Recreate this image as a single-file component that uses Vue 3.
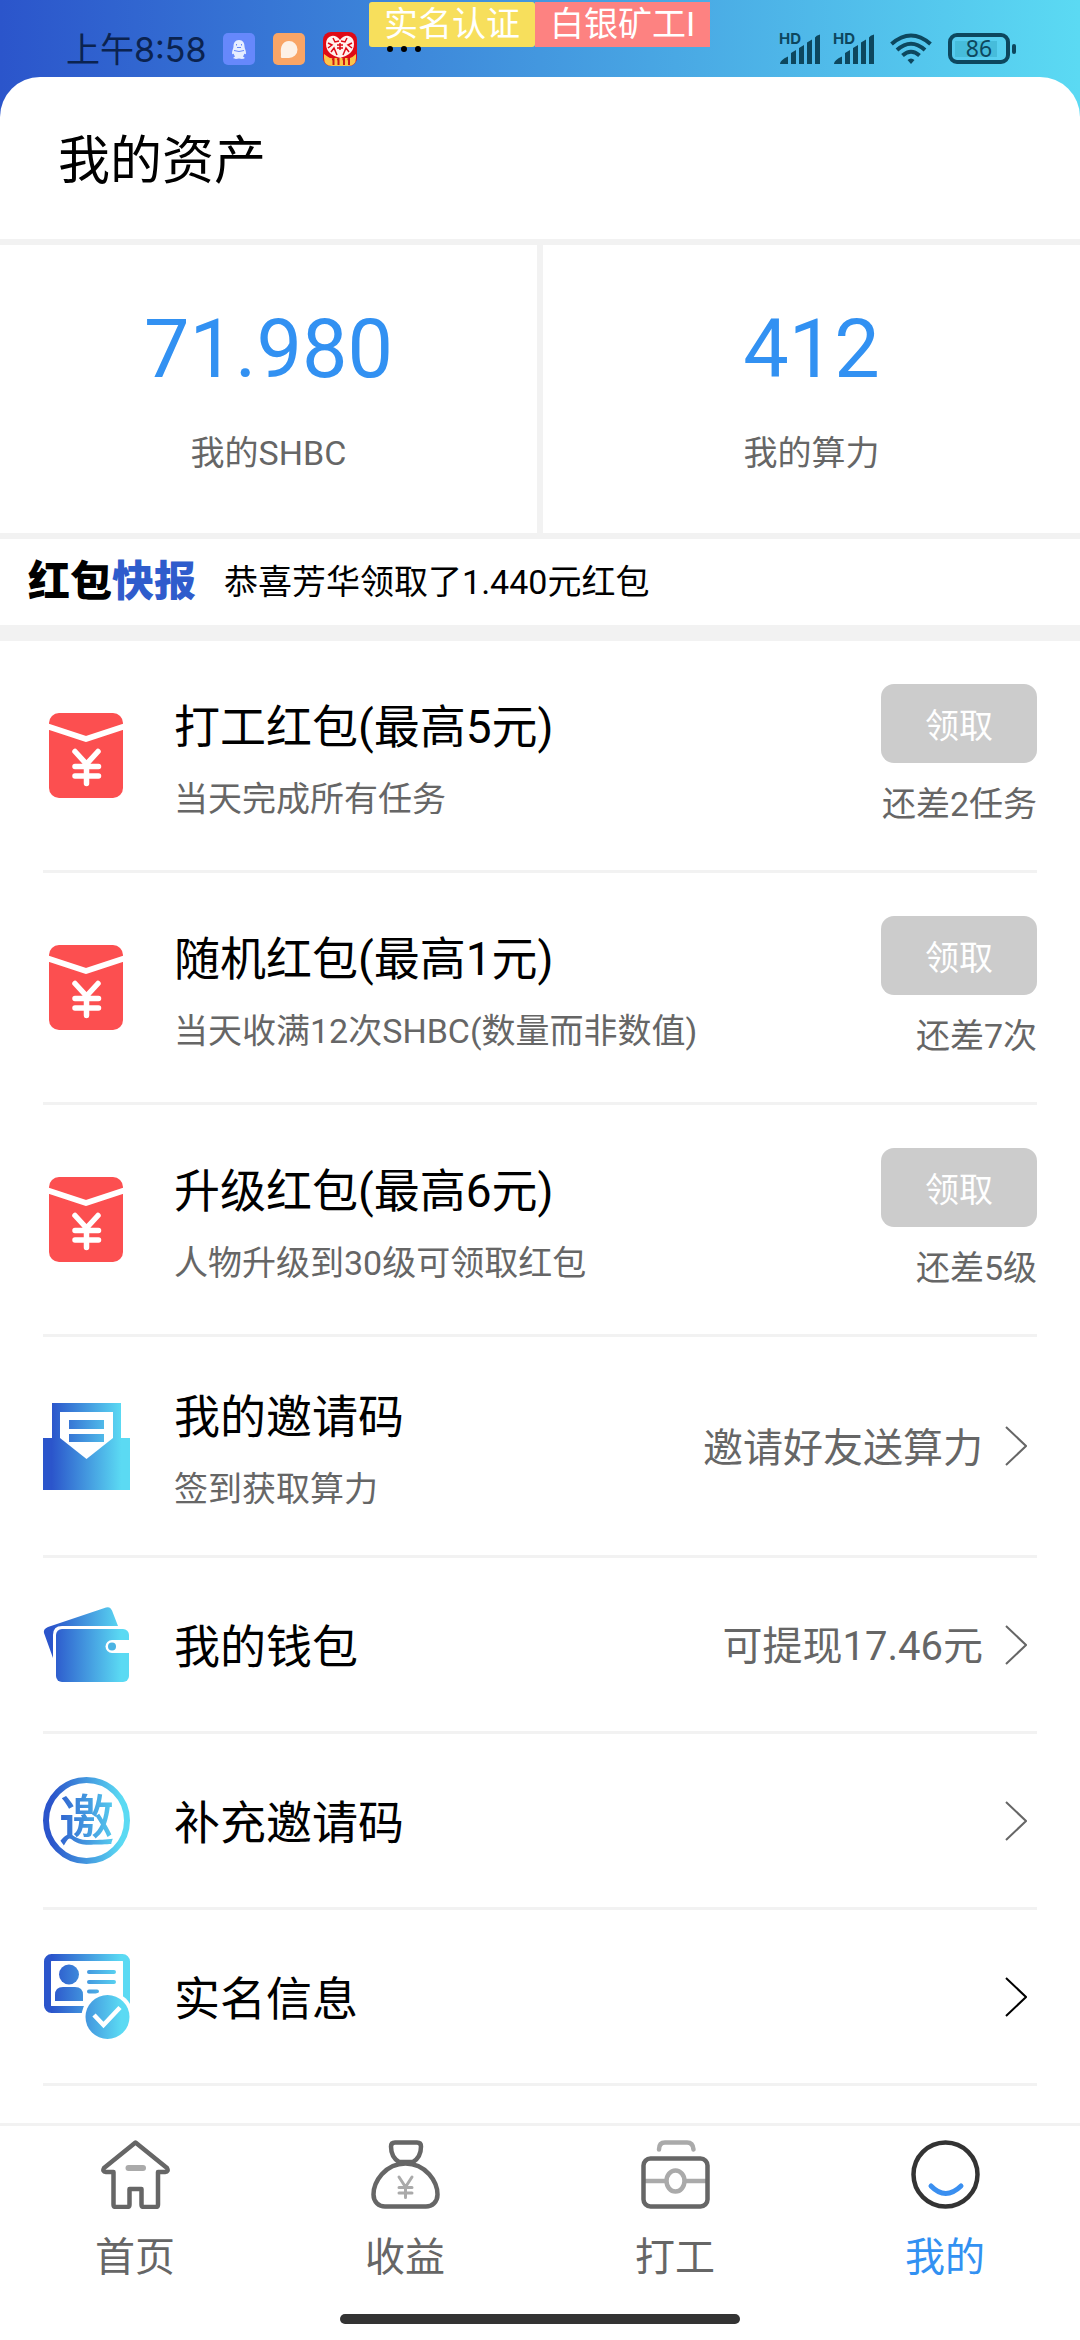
<script setup>
const stats = [
  { value: '71.980', label: '我的SHBC' },
  { value: '412', label: '我的算力' },
]

const rewards = [
  { title: '打工红包(最高5元)', note: '当天完成所有任务', left: '还差2任务' },
  { title: '随机红包(最高1元)', note: '当天收满12次SHBC(数量而非数值)', left: '还差7次' },
  { title: '升级红包(最高6元)', note: '人物升级到30级可领取红包', left: '还差5级' },
]

const links = [
  { icon: 'invite', title: '我的邀请码', note: '签到获取算力', extra: '邀请好友送算力' },
  { icon: 'wallet', title: '我的钱包', extra: '可提现17.46元' },
  { icon: 'code', title: '补充邀请码' },
  { icon: 'identity', title: '实名信息', dark: true },
]

const tabs = [
  { icon: 'home', label: '首页' },
  { icon: 'income', label: '收益' },
  { icon: 'work', label: '打工' },
  { icon: 'mine', label: '我的', active: true },
]
</script>

<template>
  <div class="page">
    <svg class="defs" width="0" height="0" aria-hidden="true">
      <defs>
        <linearGradient id="brand" gradientUnits="userSpaceOnUse" x1="0" y1="0" x2="87" y2="0">
          <stop offset="0.1" stop-color="#2b55cb" />
          <stop offset="0.9" stop-color="#5bdaf3" />
        </linearGradient>
      </defs>
    </svg>

    <header class="top">
      <div class="status">
        <time class="clock">上午8:58</time>
        <div class="notices">
          <svg width="32" height="32" viewBox="0 0 32 32">
            <rect width="32" height="32" rx="5" fill="#6688fb" />
            <path d="M16 7c-4 0-5.500 3-5.500 6.500 0 2-1.500 4-1.500 6.500 0 1.500 1 1.500 1.600.5.400 1.500 1 2.300 1.400 3-.900.500-2 1-1.500 1.800.600.900 4 .700 5.500.200 1.500.500 4.900.700 5.500-.200.500-.800-.600-1.300-1.500-1.800.400-.700 1-1.500 1.400-3 .600 1 1.600 1 1.600-.5 0-2.500-1.500-4.500-1.500-6.500C21.500 10 20 7 16 7z" fill="#e6edff" />
            <path d="M13.500 11v1.500M18.500 11v1.500M14 14.500h4M11 17.500q5 2 10 0" fill="none" stroke="#6688fb" />
          </svg>
          <svg width="32" height="32" viewBox="0 0 32 32">
            <rect width="32" height="32" rx="5" fill="#f9a566" />
            <path d="M16 8a8.500 8.500 0 1 1 0 17H8.500q-1-1-.5-3.500Q6.500 8.500 16 8z" fill="#fdf1e6" />
          </svg>
          <svg width="34" height="34" viewBox="0 0 34 34">
            <rect width="34" height="34" rx="8" fill="#df0a16" />
            <path d="M1 22q4 3 6 4h20q3-1 6-4v4q0 8-8 8H9q-8 0-8-8z" fill="#fbc54a" />
            <path d="M17 8Q13 3 8.500 4 3 5.500 3 12q0 6 5 10 3 2.500 9 4 6-1.500 9-4 5-4 5-10 0-6.500-5.500-8Q21 3 17 8z" fill="#fff2ee" />
            <path d="M10 6l2 4 4-1M24 6l-2 4-4-1M5 11l4 2-4 3M29 11l-4 2 4 3M8 20l3-4 3 7M26 20l-3-4-3 7M14 13h6M14 16h6M17 11v7" fill="none" stroke="#df0a16" stroke-width="1.500" />
            <path d="M9 27.500l1.500-.5v6M14 27.500l1.500-.5v6M19.500 27.500l1.500-.5v6M24.500 27.500l1.500-.5v6" fill="none" stroke="#cf1b13" stroke-width="2" />
          </svg>
          <svg class="more" width="34" height="8" viewBox="0 0 34 8">
            <circle cx="3" cy="4" r="3" /><circle cx="17" cy="4" r="3" /><circle cx="31" cy="4" r="3" />
          </svg>
        </div>
        <div class="signals">
          <svg v-for="n in 2" :key="n" class="signal" width="42" height="40" viewBox="0 -8 42 40" fill="#0d475e">
            <text x="0" y="11" class="hd">HD</text>
            <path d="M1 31q0-4 8-7.500V31zM12 20l5-3v14h-5zM20 15l5-3v19h-5zM28 9.500l5-3V31h-5zM36 4.500q1-2 5-3V31h-5z" />
          </svg>
          <svg class="wifi" width="42" height="32" viewBox="0 0 42 32" fill="none" stroke="#0d475e" stroke-width="4">
            <path d="M1.500 11Q21-6 40.500 11M7 17Q21 4.500 35 17M12.500 22.500Q21 15 29.500 22.500" />
            <path d="M17.500 27q3.500-3 7 0L21 31z" fill="#0d475e" stroke="none" />
          </svg>
          <svg width="68" height="32" viewBox="0 0 68 32">
            <rect x="7" y="8" width="42" height="16" fill="#46bcdb" />
            <rect x="2" y="2" width="58" height="27" rx="7" fill="none" stroke="#0d475e" stroke-width="4" />
            <rect x="64" y="11" width="4" height="10" rx="2" fill="#0d475e" />
            <text x="31" y="24" class="level" text-anchor="middle">86</text>
          </svg>
        </div>
      </div>
      <div class="tags">
        <span class="tag tag-yellow">实名认证</span>
        <span class="tag tag-pink">白银矿工I</span>
      </div>
    </header>

    <main class="card">
      <h1 class="heading">我的资产</h1>

      <section class="stats">
        <div v-for="s in stats" :key="s.label" class="stat">
          <strong class="stat-value">{{ s.value }}</strong>
          <span class="stat-label">{{ s.label }}</span>
        </div>
      </section>

      <section class="news">
        <span class="news-logo">红包<em>快报</em></span>
        <span class="news-text">恭喜芳华领取了1.440元红包</span>
      </section>

      <ul class="list">
        <li v-for="r in rewards" :key="r.title" class="row">
          <svg class="icon" viewBox="0 0 87 87">
            <rect x="6" y="1" width="74" height="85" rx="10" fill="#fc4f50" />
            <path d="M5 14.500L43 27L81 14.500" fill="none" stroke="#fff" stroke-width="6" stroke-linejoin="round" />
            <path d="M32 39.500L43.500 52L55 39.500M43.500 52V71.500M32 54.500H55.500M32 64H55.500" fill="none" stroke="#fff" stroke-width="5.500" stroke-linecap="round" stroke-linejoin="round" />
          </svg>
          <div class="info">
            <h2 class="title">{{ r.title }}</h2>
            <p class="note">{{ r.note }}</p>
          </div>
          <div class="claim">
            <button class="claim-button" type="button" disabled>领取</button>
            <span class="claim-left">{{ r.left }}</span>
          </div>
        </li>

        <li v-for="l in links" :key="l.title">
          <a class="row" href="#">
            <svg v-if="l.icon === 'invite'" class="icon" viewBox="0 0 87 87">
              <path d="M9 0H78V35H87V87H0V35H9z" fill="url(#brand)" />
              <path d="M17 9H70V35L43.500 56L17 35z" fill="#fff" />
              <path d="M26 17H61V26H26zM26 31H61V39H26z" fill="url(#brand)" />
            </svg>
            <svg v-else-if="l.icon === 'wallet'" class="icon" viewBox="0 0 87 87">
              <path d="M5 26L63 6.500Q67 5 69 9.500L75 25H19Q10 25 10 34V57L1 32Q0 28 5 26z" fill="url(#brand)" />
              <rect x="13" y="28" width="73" height="53" rx="6" fill="url(#brand)" />
              <path d="M88 39H69a6.500 6.500 0 0 0 0 13H88z" fill="#fff" />
              <circle cx="69" cy="45.500" r="4" fill="#4bb3e3" />
            </svg>
            <svg v-else-if="l.icon === 'code'" class="icon" viewBox="0 0 87 87">
              <circle cx="43.500" cy="43.500" r="40.500" fill="none" stroke="url(#brand)" stroke-width="6" />
              <text x="43.500" y="64" class="seal" text-anchor="middle" fill="url(#brand)">邀</text>
            </svg>
            <svg v-else class="icon" viewBox="0 0 87 87">
              <rect x="4.500" y="4.500" width="79" height="52" rx="4" fill="none" stroke="url(#brand)" stroke-width="7" />
              <circle cx="26" cy="21.500" r="10" fill="url(#brand)" />
              <path d="M12 48V42Q12 34 20 34H32Q40 34 40 42V48z" fill="url(#brand)" />
              <path d="M46 17h25a2 2 0 0 1 0 4h-25a2 2 0 0 1 0-4zM46 27h25a2 2 0 0 1 0 4h-25a2 2 0 0 1 0-4zM46 36.500h8a2 2 0 0 1 0 4h-8a2 2 0 0 1 0-4z" fill="url(#brand)" />
              <circle cx="64.500" cy="64" r="26" fill="#fff" />
              <circle cx="64.500" cy="64" r="22" fill="url(#brand)" />
              <path d="M51 62L60.500 72L77 54.500" fill="none" stroke="#fff" stroke-width="4.500" />
            </svg>
            <div class="info">
              <h2 class="title">{{ l.title }}</h2>
              <p v-if="l.note" class="note">{{ l.note }}</p>
            </div>
            <span v-if="l.extra" class="extra">{{ l.extra }}</span>
            <svg class="arrow" :class="{ dark: l.dark }" viewBox="0 0 22 40">
              <path d="M1 1L21 20L1 39" fill="none" stroke="currentColor" stroke-width="2" />
            </svg>
          </a>
        </li>
      </ul>
    </main>

    <nav class="tabbar">
      <div class="tabs">
        <a v-for="t in tabs" :key="t.label" class="tab" :class="{ active: t.active }" href="#">
          <svg class="tab-icon" viewBox="0 0 69 69" fill="none" stroke-width="4.500" stroke-linecap="round" stroke-linejoin="round">
            <template v-if="t.icon === 'home'">
              <path d="M34.500 2.500L66 28Q68 31.500 64 32H57V64.500Q57 67 54.500 67H43Q40.500 67 40.500 64.500V49H28.500V64.500Q28.500 67 26 67H15Q12.500 67 12.500 64.500V32H5Q1 31.500 3 28z" stroke="#666" />
              <path d="M27.500 28H42" stroke="#aaa" stroke-width="6" />
            </template>
            <template v-else-if="t.icon === 'income'">
              <path d="M24 2.500H46Q50 2.500 50 6.500Q50 17 42 22H28Q20 17 20 6.500Q20 2.500 24 2.500z" stroke="#666" />
              <path d="M34.500 23.500C14 23.500 2.500 42 2.500 54.500C2.500 62 8 66.500 14 66.500H55C61 66.500 66.500 62 66.500 54.500C66.500 42 55 23.500 34.500 23.500z" stroke="#666" />
              <path d="M28 37L34.500 47L41 37M34.500 47V57.500M28 47.500H41M28 53H41" stroke="#aaa" stroke-width="3" />
            </template>
            <template v-else-if="t.icon === 'work'">
              <path d="M18 9.500Q18 2.500 24 2.500H46Q52 2.500 52.500 9.500M4 41H24M45 41H65" stroke="#aaa" />
              <ellipse cx="34.500" cy="41" rx="9" ry="10.500" stroke="#aaa" />
              <rect x="2.500" y="18.500" width="64" height="48" rx="7" stroke="#666" />
            </template>
            <template v-else>
              <circle cx="34.500" cy="34.500" r="32" stroke="#333" />
              <path d="M20 46Q34.500 61 50 46" stroke="#3a8ff0" stroke-width="5" />
            </template>
          </svg>
          <span class="tab-label">{{ t.label }}</span>
        </a>
      </div>
      <div class="indicator"></div>
    </nav>
  </div>
</template>

<style>
body {
  margin: 0;
  background: #fff;
}
</style>

<style scoped>
.page {
  display: flex;
  flex-direction: column;
  min-height: 100vh;
  font-family: Roboto, "Noto Sans CJK SC", sans-serif;
  color: #000;
  background: linear-gradient(90deg, #2b55cb, #5bdaf3);
}

.defs {
  position: absolute;
}

.top {
  position: relative;
}

.tags {
  position: absolute;
  top: 2px;
  left: 369px;
  display: flex;
}

.tag {
  padding: 0 15px;
  font-size: 34px;
  line-height: 45px;
  white-space: nowrap;
  color: #fff;
}

.tag-yellow {
  border-radius: 3px;
  background: #f7df5c;
}

.tag-pink {
  background: #fd8281;
}

.status {
  display: flex;
  align-items: center;
  height: 77px;
  padding: 20px 64px 0 66px;
  box-sizing: border-box;
}

.clock {
  padding-bottom: 2px;
  font-family: Inter, "Noto Sans CJK SC", sans-serif;
  font-size: 34px;
  color: #0b2350;
}

.notices {
  display: flex;
  align-items: center;
  gap: 18px;
  margin-left: 16px;
}

.more {
  position: relative;
  z-index: 1;
  margin-left: 12px;
}

.signals {
  display: flex;
  align-items: flex-end;
  gap: 12px;
  margin-left: auto;
  padding-bottom: 8px;
}

.signal {
  overflow: visible;
}

.wifi {
  margin: 0 4px 0 3px;
}

.hd {
  font-family: Inter, sans-serif;
  font-size: 15px;
  font-weight: 700;
}

.level {
  font-family: "Noto Sans", sans-serif;
  font-size: 23px;
  fill: #0d475e;
}

.card {
  flex: 1;
  border-radius: 40px 40px 0 0;
  background: #fff;
}

.heading {
  margin: 0;
  padding: 8px 58px 0;
  font-size: 52px;
  font-weight: 400;
  line-height: 154px;
}

.stats {
  display: grid;
  grid-template-columns: 1fr 1fr;
  gap: 6px;
  border-top: 6px solid #f2f2f2;
  border-bottom: 6px solid #f2f2f2;
  background: #f2f2f2;
}

.stat {
  display: flex;
  flex-direction: column;
  align-items: center;
  gap: 30px;
  padding: 57px 0 54px;
  background: #fff;
}

.stat-value {
  font-size: 81px;
  font-weight: 400;
  line-height: 96px;
  color: #3291f2;
}

.stat-label {
  font-size: 34px;
  line-height: 51px;
  color: #666;
}

.news {
  display: flex;
  align-items: center;
  gap: 28px;
  height: 86px;
  padding: 0 28px;
  border-bottom: 16px solid #f2f2f2;
}

.news-logo {
  font-size: 42px;
  font-weight: 900;
  line-height: 60px;
}

.news-logo em {
  font-style: normal;
  color: #2f5ccc;
}

.news-text {
  font-size: 34px;
  line-height: 51px;
}

.list {
  margin: 0;
  padding: 0 43px;
  list-style: none;
}

.row {
  display: flex;
  align-items: center;
  padding: 43px 0;
  border-bottom: 3px solid #f2f2f2;
  color: inherit;
  text-decoration: none;
}

.icon {
  flex: none;
  width: 87px;
  height: 87px;
}

.seal {
  font-size: 56px;
  font-weight: 500;
}

.info {
  display: flex;
  flex: 1;
  flex-direction: column;
  gap: 17px;
  margin-left: 44px;
  padding-top: 4px;
}

.title {
  margin: 0;
  font-size: 46px;
  font-weight: 400;
  line-height: 66px;
}

.note {
  margin: 0;
  font-size: 34px;
  line-height: 45px;
  color: #666;
}

.claim {
  display: flex;
  flex-direction: column;
  align-items: flex-end;
  gap: 19px;
}

.claim-button {
  width: 156px;
  height: 79px;
  padding: 5px 0 0;
  border: 0;
  border-radius: 13px;
  font-family: inherit;
  font-size: 34px;
  line-height: 74px;
  color: #fff;
  background: #ccc;
}

.claim-left {
  font-size: 34px;
  line-height: 45px;
  color: #666;
}

.extra {
  margin-right: 22px;
  padding-top: 5px;
  font-size: 40px;
  line-height: 58px;
  color: #666;
}

.arrow {
  flex: none;
  width: 22px;
  height: 40px;
  margin-right: 10px;
  color: #666;
}

.arrow.dark {
  color: #000;
}

.tabbar {
  position: sticky;
  bottom: 0;
  border-top: 3px solid #f2f2f2;
  background: #fff;
}

.tabs {
  display: grid;
  grid-template-columns: repeat(4, 1fr);
}

.tab {
  display: flex;
  flex-direction: column;
  align-items: center;
  gap: 20px;
  padding: 14px 0 27px;
  color: #666;
  text-decoration: none;
}

.tab.active {
  color: #3291f2;
}

.tab-icon {
  width: 69px;
  height: 69px;
}

.tab-label {
  font-size: 40px;
  line-height: 58px;
}

.indicator {
  width: 37%;
  height: 10px;
  margin: 0 auto 16px;
  border-radius: 5px;
  background: #333;
}
</style>
